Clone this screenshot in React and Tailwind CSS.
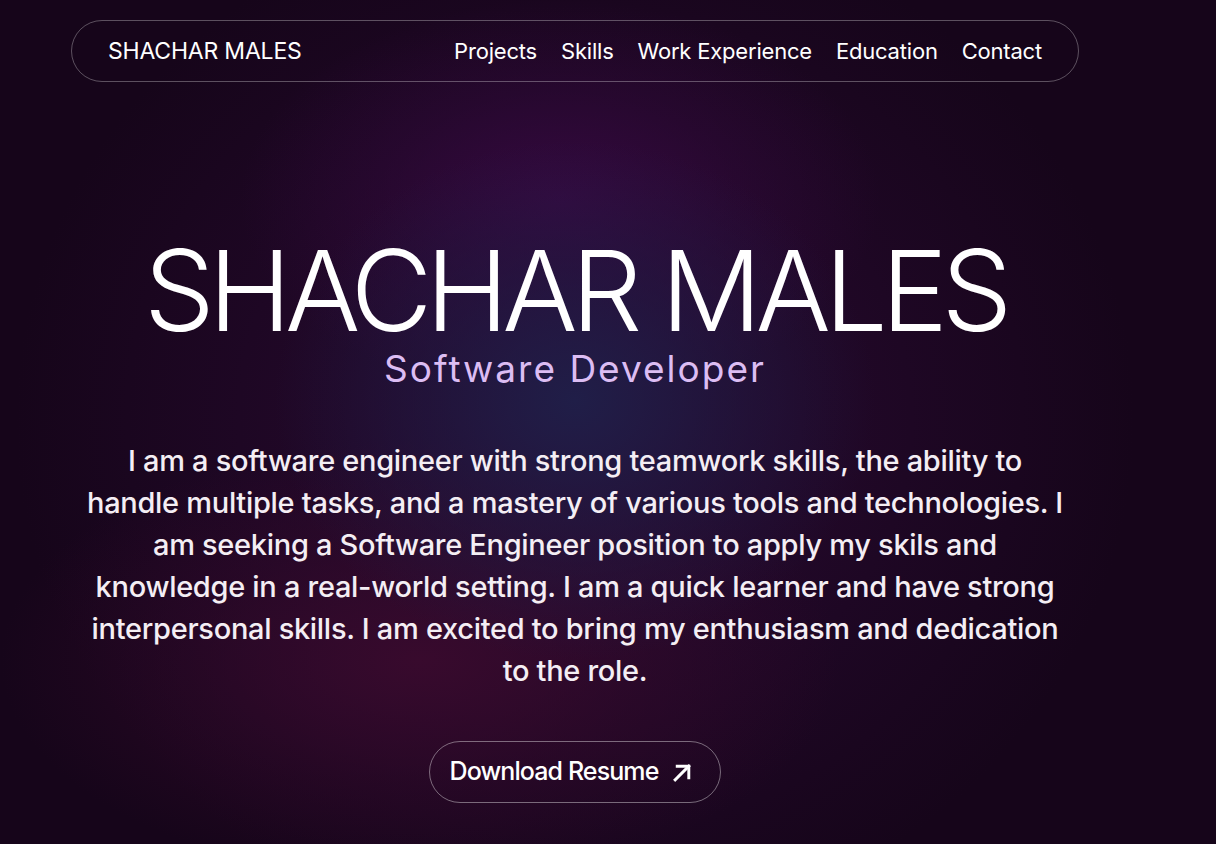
const navLinks = ['Projects', 'Skills', 'Work Experience', 'Education', 'Contact']

function ArrowIcon() {
  return (
    <svg width="21" height="21" viewBox="0 0 20 20" fill="none" stroke="currentColor" strokeWidth="2.8" strokeLinecap="square">
      <path d="M3 17 16 4" />
      <path d="M5 4h11v11" />
    </svg>
  )
}

export default function App() {
  return (
    <div className="min-h-screen w-full overflow-hidden bg-[#16051a] bg-[radial-gradient(ellipse_300px_260px_at_575px_400px,#201e48_0%,rgba(31,29,70,0.55)_45%,transparent_100%),radial-gradient(ellipse_320px_200px_at_560px_200px,#34093f_0%,rgba(52,9,63,0.4)_55%,transparent_100%),radial-gradient(ellipse_420px_220px_at_420px_660px,#380a2d_0%,rgba(56,10,45,0.4)_55%,transparent_100%),radial-gradient(ellipse_560px_520px_at_575px_420px,#2a0a33_0%,transparent_100%)] font-['Inter',sans-serif] text-white">
      <div className="w-[1150px]">
        {/* Nav */}
        <div className="px-[71px] pt-[20px]">
          <nav className="flex h-[62px] items-center justify-between rounded-full border border-white/30 pl-[36px] pr-[36px]">
            <span className="text-[23px] tracking-[-0.2px]">SHACHAR MALES</span>
            <ul className="flex items-center gap-[24px] text-[22px] tracking-[-0.2px]">
              {navLinks.map((link) => (
                <li key={link}>{link}</li>
              ))}
            </ul>
          </nav>
        </div>

        {/* Hero */}
        <section className="flex flex-col items-center text-center">
          <h1 className="mt-[166px] text-[112px] font-[350] leading-[84px] tracking-[-6.4px]">SHACHAR MALES</h1>
          <p className="mt-[17px] text-[37px] leading-[40px] tracking-[2px] text-[#dcbdf3]">Software Developer</p>
          <p className="mt-[51px] text-[29px] font-medium leading-[42px] tracking-[-0.3px] text-[#f4eef4]">
            I am a software engineer with strong teamwork skills, the ability to
            <br />
            handle multiple tasks, and a mastery of various tools and technologies. I
            <br />
            am seeking a Software Engineer position to apply my skils and
            <br />
            knowledge in a real-world setting. I am a quick learner and have strong
            <br />
            interpersonal skills. I am excited to bring my enthusiasm and dedication
            <br />
            to the role.
          </p>
          <button className="mt-[49px] flex h-[62px] items-center gap-[14px] rounded-full border border-white/40 pl-[20px] pr-[27px] text-[25px] font-medium tracking-[-0.9px]">
            Download Resume
            <ArrowIcon />
          </button>
        </section>
      </div>
    </div>
  )
}
